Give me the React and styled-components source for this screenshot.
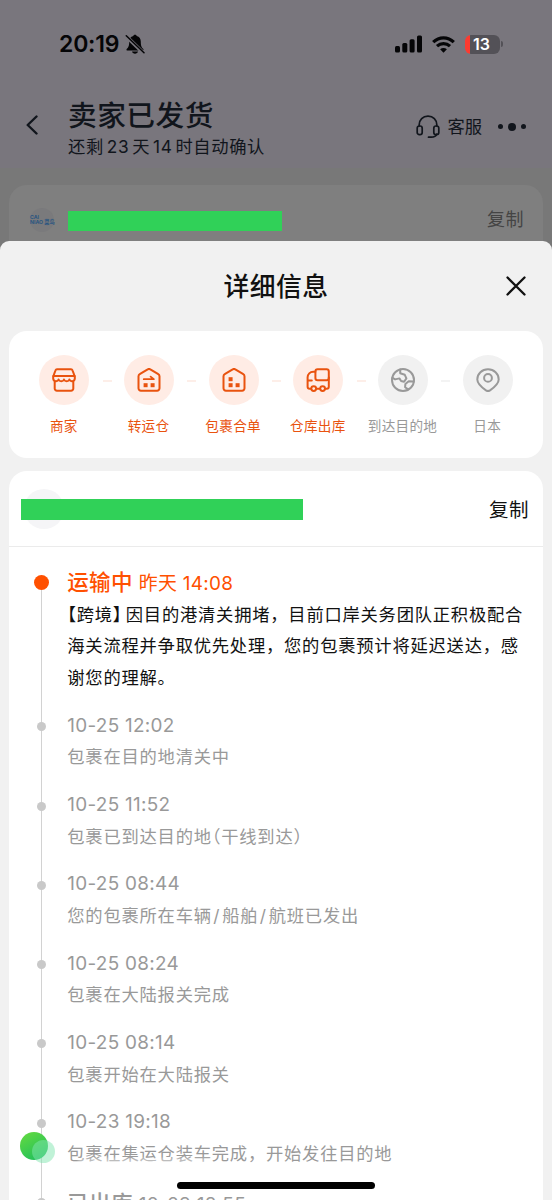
import React from "react";
import styled, { createGlobalStyle } from "styled-components";

const GlobalStyle = createGlobalStyle`
  * {
    box-sizing: border-box;
  }
  body {
    margin: 0;
    background: #787878;
    font-family: "Inter", "Noto Sans CJK SC", sans-serif;
    -webkit-font-smoothing: antialiased;
  }
`;

/* full-width brackets set to half their width */
const Half = styled.span`
  font-feature-settings: "halt";
  margin-left: ${(props) => props.$left || 0}px;
  margin-right: ${(props) => props.$right || 0}px;
`;

const Slash = styled.span`
  margin: 0 2px 0 1.4px;
`;

const steps = [
  { name: "商家", icon: "shop", done: true },
  { name: "转运仓", icon: "transfer", done: true },
  { name: "包裹合单", icon: "merge", done: true },
  { name: "仓库出库", icon: "truck", done: true },
  { name: "到达目的地", icon: "globe", done: false },
  { name: "日本", icon: "pin", done: false },
];

const logs = [
  { time: "10-25 12:02", text: "包裹在目的地清关中" },
  {
    time: "10-25 11:52",
    text: (
      <>
        包裹已到达目的地
        <Half>（</Half>干线到达<Half>）</Half>
      </>
    ),
  },
  {
    time: "10-25 08:44",
    text: (
      <>
        您的包裹所在车辆<Slash>/</Slash>船舶<Slash>/</Slash>航班已发出
      </>
    ),
  },
  { time: "10-25 08:24", text: "包裹在大陆报关完成" },
  { time: "10-25 08:14", text: "包裹开始在大陆报关" },
  { time: "10-23 19:18", text: "包裹在集运仓装车完成，开始发往目的地" },
  { title: "已出库", time: "10-23 18:55", text: "" },
];

function StepIcon({ name }) {
  return (
    <StepSvg viewBox="0 0 24 24">
      {name === "shop" && (
        <>
          <path d="M5 1.2h14a1.6 1.6 0 0 1 1.5 1.1l2.3 6.2v2.200a2.800 2.800 0 0 1-5.400.800 2.900 2.900 0 0 1-5.400 0 2.900 2.900 0 0 1-5.400 0 2.800 2.800 0 0 1-5.400-.8V8.500l2.300-6.200A1.600 1.600 0 0 1 5 1.200z" />
          <path d="M1.4 8h21.200" />
          <path d="M2.700 14v6.500a2.200 2.200 0 0 0 2.200 2.200h14.200a2.200 2.200 0 0 0 2.200-2.200V14" />
        </>
      )}
      {(name === "transfer" || name === "merge") && (
        <>
          <path d="M10.7 1.3a2.4 2.4 0 0 1 2.6 0l8 4.9a2.4 2.4 0 0 1 1.2 2v12.1a2.4 2.4 0 0 1-2.4 2.4H3.9a2.4 2.4 0 0 1-2.4-2.4V8.2a2.4 2.4 0 0 1 1.2-2z" />
          <rect x="6.6" y="15.2" width="4" height="4" fill="currentColor" stroke="none" />
          <rect x="13.6" y="15.2" width="4" height="4" fill="currentColor" stroke="none" />
          {name === "transfer" ? (
            <path d="M6.8 11.2h10l-3.2-2.6" strokeWidth="1.8" />
          ) : (
            <rect x="6.6" y="9.2" width="4" height="4" fill="currentColor" stroke="none" />
          )}
        </>
      )}
      {name === "truck" && (
        <>
          <rect x="9.4" y="1.2" width="13.4" height="11" rx="2.2" />
          <path d="M9.4 3.7H7.2a5.6 5.6 0 0 0-5.6 5.6v9.5a2 2 0 0 0 2 2h1M10.8 20.8h2.7M19.7 20.8h1.1a2 2 0 0 0 2-2V9.5M1.6 12.6h4.2" />
          <circle cx="7.7" cy="20.6" r="2.4" />
          <circle cx="16.6" cy="20.6" r="2.4" />
        </>
      )}
      {name === "globe" && (
        <>
          <circle cx="12" cy="12" r="11" />
          <path d="M9.2 1.6v3.7l4.6 1.5 1.6 3.6-2.3 3.3-3-.7-1.7-2.6-4.3 1-2.6-1.5" />
          <path d="M22.7 13.6l-5-.4-3.3 2.7-.3 3.3 3 2.2" />
        </>
      )}
      {name === "pin" && (
        <>
          <path d="M12 1.2c-6 0-10.7 4.5-10.7 10.2 0 4.3 4.2 7.7 8.7 11 1.3.9 2.7.9 4 0 4.5-3.3 8.7-6.7 8.7-11C22.7 5.7 18 1.2 12 1.2z" />
          <circle cx="12" cy="9.9" r="3.9" />
        </>
      )}
    </StepSvg>
  );
}

function StatusBar() {
  return (
    <StatusRow>
      <Clock>20:19</Clock>
      <svg width="20" height="20" viewBox="0 0 20 20">
        <path
          d="M10 .8c.9 0 1.500.5 1.700 1.200 2.800.8 4.100 2.900 4.100 5.700 0 4.200.8 5.600 2.300 7 .8.800.4 1.800-.6 1.800H2.500c-1 0-1.400-1-.6-1.800 1.500-1.400 2.300-2.800 2.300-7C4.200 4.900 5.500 2.800 8.300 2 8.500 1.300 9.100.8 10 .8zM7 17.500h6c-.3 1.300-1.500 2.200-3 2.200s-2.700-.9-3-2.200z"
          fill="#050507"
        />
        <path d="M.8 1.9l17.5 17" stroke="#79767d" strokeWidth="3.6" />
        <path d="M1.3 1.7l17.7 17" stroke="#050507" strokeWidth="1.5" strokeLinecap="round" />
      </svg>
      <StatusRight>
        <svg width="27" height="18" viewBox="0 0 27 18" fill="#050507">
          <rect x="0" y="11" width="5" height="6.5" rx="1.5" />
          <rect x="7.3" y="8" width="5" height="9.5" rx="1.5" />
          <rect x="14.6" y="4.3" width="5" height="13.2" rx="1.5" />
          <rect x="22" y="0.4" width="5" height="17.1" rx="1.5" />
        </svg>
        <svg width="23" height="17" viewBox="0 0 23 17" fill="none" stroke="#050507" strokeWidth="3.2">
          <path d="M1.2 6.1c5.9-5.7 14.7-5.7 20.6 0" />
          <path d="M5 10.2c3.7-3.5 9.3-3.5 13 0" />
          <path d="M11.5 16.8l-3.4-3.5c2-1.7 4.8-1.7 6.8 0z" fill="#050507" stroke="none" />
        </svg>
        <Battery>
          <BatteryBody>13</BatteryBody>
          <BatteryTip />
        </Battery>
      </StatusRight>
    </StatusRow>
  );
}

function App() {
  return (
    <Screen>
      <GlobalStyle />
      <TopArea>
        <StatusBar />
        <NavBar>
          <BackIcon viewBox="0 0 12 20">
            <path d="M10.5 1.5L1.7 10l8.8 8.5" />
          </BackIcon>
          <NavText>
            <NavTitle>卖家已发货</NavTitle>
            <NavSub>
              还剩<Num>23</Num>天<Num>14</Num>时自动确认
            </NavSub>
          </NavText>
          <Headset viewBox="0 0 24 24">
            <path d="M3.2 11V9.8C3.2 4.6 6.8 1.2 12 1.2s8.8 3.4 8.8 8.6V11M20.8 19c-.8 2.3-2.7 3.2-5.6 3.2h-2.7" />
            <rect x="1.2" y="11" width="5" height="8.6" rx="2.2" />
            <rect x="17.8" y="11" width="5" height="8.6" rx="2.2" />
          </Headset>
          <Service>客服</Service>
          <Dots>
            <Dot $size={5} />
            <Dot $size={8} />
            <Dot $size={5} />
          </Dots>
        </NavBar>
      </TopArea>
      <BackCard>
        <Carrier>
          <span>CAI</span>
          <span>NIAO 菜鸟</span>
        </Carrier>
        <BackMask />
        <BackCopy>复制</BackCopy>
      </BackCard>

      <Sheet>
        <SheetHeader>
          <SheetTitle>详细信息</SheetTitle>
          <CloseIcon viewBox="0 0 20 20">
            <path d="M1.5 1.5l17 17M18.5 1.5l-17 17" />
          </CloseIcon>
        </SheetHeader>

        <StepCard>
          {steps.map((step) => (
            <Step key={step.name} $done={step.done}>
              <StepCircle $done={step.done}>
                <StepIcon name={step.icon} />
              </StepCircle>
              <StepName>{step.name}</StepName>
            </Step>
          ))}
        </StepCard>

        <DetailCard>
          <DetailHeader>
            <Avatar>
              <Mask />
            </Avatar>
            <Copy>复制</Copy>
          </DetailHeader>
          <Timeline>
            <LogRow $first>
              <Rail $first>
                <Bullet $active />
              </Rail>
              <LogBody>
                <LogHead $active>
                  <LogTitle>运输中</LogTitle>
                  <span>昨天 14:08</span>
                </LogHead>
                <LogText $active>
                  <Half>【</Half>跨境<Half $right={3.5}>】</Half>
                  因目的港清关拥堵，目前口岸关务团队正积极配合
                  <br />
                  海关流程并争取优先处理，您的包裹预计将延迟送达，感
                  <br />
                  谢您的理解。
                </LogText>
              </LogBody>
            </LogRow>
            {logs.map((log) => (
              <LogRow key={log.time}>
                <Rail>
                  <Bullet />
                </Rail>
                <LogBody>
                  <LogHead $titled={!!log.title}>
                    {log.title && <LogTitle>{log.title}</LogTitle>}
                    <span>{log.time}</span>
                  </LogHead>
                  <LogText>{log.text}</LogText>
                </LogBody>
              </LogRow>
            ))}
          </Timeline>
        </DetailCard>
      </Sheet>

      <Haze />
      <GreenBall />
      <MintBall />
      <HomeBar />
    </Screen>
  );
}

export default App;

const Screen = styled.div`
  position: relative;
  width: 552px;
  height: 1200px;
  overflow: hidden;
  display: flex;
  flex-direction: column;
  background: #787878;
`;

const TopArea = styled.div`
  height: 168px;
  flex-shrink: 0;
  background: #79767d;
  padding-top: 31px;
`;

const StatusRow = styled.div`
  display: flex;
  align-items: center;
  height: 26px;
  padding: 0 49px 0 59px;
  color: #050507;
`;

const Clock = styled.div`
  width: 66px;
  font-size: 23px;
  font-weight: 600;
  letter-spacing: -0.2px;
  white-space: nowrap;
`;

const StatusRight = styled.div`
  display: flex;
  align-items: center;
  gap: 10px;
  margin-left: auto;
`;

const Battery = styled.div`
  display: flex;
  align-items: center;
  gap: 1px;
`;

const BatteryBody = styled.div`
  width: 35px;
  height: 19px;
  border-radius: 6px;
  background: linear-gradient(90deg, #fc3b30 5px, #535157 5px);
  color: #fff;
  font-size: 16px;
  font-weight: 600;
  line-height: 19px;
  text-align: center;
  padding-right: 2px;
`;

const BatteryTip = styled.div`
  width: 2px;
  height: 6px;
  border-radius: 0 2px 2px 0;
  background: #535157;
`;

const NavBar = styled.div`
  display: flex;
  align-items: center;
  margin-top: 38px;
  height: 64px;
  padding: 0 26px;
  color: #11151c;
`;

const BackIcon = styled.svg`
  width: 12px;
  height: 20px;
  margin-top: -4px;
  fill: none;
  stroke: #11151c;
  stroke-width: 2.4;
  stroke-linecap: round;
  stroke-linejoin: round;
`;

const NavText = styled.div`
  margin: 3px 0 0 30px;
  white-space: nowrap;
`;

const NavTitle = styled.div`
  font-size: 28.7px;
  font-weight: 500;
  line-height: 37px;
  letter-spacing: 0.5px;
`;

const NavSub = styled.div`
  font-size: 17.3px;
  line-height: 26px;
  letter-spacing: 0.6px;
`;

const Num = styled.span`
  margin: 0 3px;
`;

const Headset = styled.svg`
  width: 24px;
  height: 24px;
  margin: -1px 0 0 auto;
  fill: none;
  stroke: #11151c;
  stroke-width: 1.7;
  stroke-linecap: round;
`;

const Service = styled.div`
  margin: -4px 0 0 7px;
  font-size: 17.3px;
`;

const Dots = styled.div`
  display: flex;
  align-items: center;
  gap: 5px;
  margin: -1px 0 0 16px;
`;

const Dot = styled.div`
  width: ${(props) => props.$size}px;
  height: ${(props) => props.$size}px;
  border-radius: 50%;
  background: #11151c;
`;

const BackCard = styled.div`
  flex-shrink: 0;
  display: flex;
  align-items: center;
  height: 56px;
  margin: 17px 9px 0;
  padding: 15px 19px 0 21px;
  border-radius: 18px 18px 0 0;
  background: #7f7f7f;
`;

const Carrier = styled.div`
  display: flex;
  flex-direction: column;
  justify-content: center;
  width: 24px;
  height: 24px;
  margin-top: -2px;
  border-radius: 50%;
  background: #7a7a7c;
  color: #2c5680;
  font-size: 5.2px;
  font-weight: 700;
  line-height: 5px;
  white-space: nowrap;
`;

const BackMask = styled.div`
  width: 214px;
  height: 20px;
  margin-left: 14px;
  background: #30d158;
`;

const BackCopy = styled.div`
  margin: -5px 0 0 auto;
  font-size: 18px;
  letter-spacing: 0.5px;
  color: #444;
`;

const Sheet = styled.div`
  flex: 1;
  min-height: 0;
  padding: 0 9px;
  border-radius: 9px 9px 0 0;
  background: #f1f1f1;
`;

const SheetHeader = styled.div`
  display: flex;
  align-items: center;
  justify-content: center;
  position: relative;
  height: 90px;
  padding-bottom: 4px;
`;

const SheetTitle = styled.div`
  font-size: 25.8px;
  font-weight: 500;
  letter-spacing: 0.5px;
  color: #111;
`;

const CloseIcon = styled.svg`
  position: absolute;
  right: 17px;
  top: 35px;
  width: 20px;
  height: 20px;
  fill: none;
  stroke: #111;
  stroke-width: 2.3;
  stroke-linecap: round;
`;

const StepCard = styled.div`
  display: flex;
  justify-content: center;
  height: 127px;
  padding-top: 24px;
  border-radius: 18px;
  background: #fff;
`;

const Step = styled.div`
  position: relative;
  display: flex;
  flex-direction: column;
  align-items: center;
  width: 84.7px;
  color: ${(props) => (props.$done ? "#e9530f" : "#999")};

  /* short dash between two steps */
  &:not(:last-child)::after {
    content: "";
    position: absolute;
    right: -5px;
    top: 25px;
    width: 9px;
    height: 2px;
    background: ${(props) => (props.$done ? "#fdeee8" : "#f3f3f3")};
  }
`;

const StepCircle = styled.div`
  display: flex;
  align-items: center;
  justify-content: center;
  width: 50px;
  height: 50px;
  border-radius: 50%;
  background: ${(props) => (props.$done ? "#ffece5" : "#f1f1f1")};
`;

const StepSvg = styled.svg`
  width: 24px;
  height: 24px;
  fill: none;
  stroke: currentColor;
  stroke-width: 2;
  stroke-linecap: round;
  stroke-linejoin: round;
`;

const StepName = styled.div`
  margin: 10px 1px 0 0;
  font-size: 13.6px;
  line-height: 22px;
  letter-spacing: 0.3px;
  white-space: nowrap;
`;

const DetailCard = styled.div`
  margin-top: 13px;
  border-radius: 18px 18px 0 0;
  background: #fff;
`;

const DetailHeader = styled.div`
  display: flex;
  align-items: center;
  justify-content: space-between;
  height: 76px;
  padding: 0 14px 0 15px;
  border-bottom: 1px solid #ebebeb;
`;

const Avatar = styled.div`
  position: relative;
  width: 40px;
  height: 40px;
  border-radius: 50%;
  background: #f5f5f7;
`;

const Mask = styled.div`
  position: absolute;
  left: -3px;
  top: 10px;
  width: 282px;
  height: 21px;
  background: #30d158;
`;

const Copy = styled.div`
  font-size: 19.5px;
  letter-spacing: 0.5px;
  color: #111;
`;

const Timeline = styled.div`
  padding: 20px 0 0 25px;
`;

const LogRow = styled.div`
  display: flex;
  height: ${(props) => (props.$first ? 142.8 : 79.3)}px;
`;

const Rail = styled.div`
  display: flex;
  justify-content: center;
  width: 15px;
  padding-top: ${(props) => (props.$first ? 8 : 12.5)}px;
  background: linear-gradient(#d2d2d2, #d2d2d2) 7px
    ${(props) => (props.$first ? "16px" : "0")} / 1px 100% no-repeat;
`;

const Bullet = styled.div`
  width: ${(props) => (props.$active ? 15 : 9)}px;
  height: ${(props) => (props.$active ? 15 : 9)}px;
  border-radius: 50%;
  background: ${(props) => (props.$active ? "#ff5000" : "#c9c9c9")};
`;

const LogBody = styled.div`
  margin-left: 18.3px;
  white-space: nowrap;
`;

const LogHead = styled.div`
  display: flex;
  align-items: baseline;
  gap: 6px;
  height: 31.7px;
  padding-top: ${(props) => (props.$titled ? 2 : 0)}px;
  line-height: 31.7px;
  font-size: 18.9px;
  letter-spacing: 0.3px;
  color: ${(props) => (props.$active ? "#ff5000" : "#999")};
`;

const LogTitle = styled.span`
  font-size: 21.5px;
  font-weight: 500;
`;

const LogText = styled.div`
  font-size: 17.3px;
  line-height: 31.7px;
  letter-spacing: 0.78px;
  color: ${(props) => (props.$active ? "#111" : "#999")};
`;

const Haze = styled.div`
  position: absolute;
  left: 78px;
  top: 1158px;
  width: 134px;
  height: 5px;
  background: rgba(255, 255, 255, 0.35);
  filter: blur(1px);
`;

const GreenBall = styled.div`
  position: absolute;
  left: 20px;
  top: 1132px;
  width: 28px;
  height: 28px;
  border-radius: 50%;
  background: linear-gradient(150deg, #5fd842 10%, #1fbf5c 90%);
`;

const MintBall = styled.div`
  position: absolute;
  left: 32px;
  top: 1140px;
  width: 23px;
  height: 23px;
  border-radius: 50%;
  background: rgba(130, 230, 175, 0.5);
`;

const HomeBar = styled.div`
  position: absolute;
  left: 177px;
  top: 1182px;
  width: 198px;
  height: 7px;
  border-radius: 4px;
  background: #000;
`;
